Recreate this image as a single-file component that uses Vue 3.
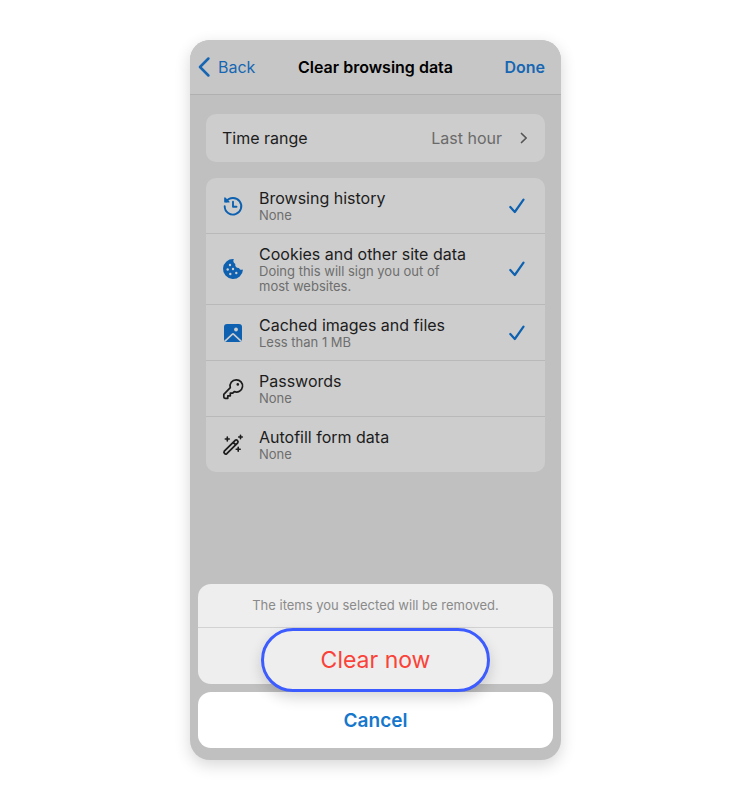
<script setup>
import { ref } from 'vue'

const timeRange = ref('Last hour')

const items = ref([
  { id: 'history', title: 'Browsing history', detail: 'None', checked: true },
  { id: 'cookies', title: 'Cookies and other site data', detail: 'Doing this will sign you out of most websites.', checked: true },
  { id: 'cache', title: 'Cached images and files', detail: 'Less than 1 MB', checked: true },
  { id: 'passwords', title: 'Passwords', detail: 'None', checked: false },
  { id: 'autofill', title: 'Autofill form data', detail: 'None', checked: false },
])

const clearNow = () => {
  items.value.forEach((item) => {
    if (item.checked) item.detail = 'None'
  })
}
</script>

<template>
  <main class="page">
    <div class="phone">
      <header class="nav">
        <button type="button" class="nav-back">
          <svg width="12" height="20" viewBox="0 0 12 20" fill="none" aria-hidden="true">
            <path d="M10.4 1.5 2 10l8.400 8.500" stroke="currentColor" stroke-width="2.500" stroke-linecap="round" stroke-linejoin="round" />
          </svg>
          Back
        </button>
        <h1 class="nav-title">Clear browsing data</h1>
        <button type="button" class="nav-done">Done</button>
      </header>

      <div class="content">
        <button type="button" class="card range">
          <span>Time range</span>
          <span class="range-value">{{ timeRange }}</span>
          <svg width="8" height="12" viewBox="0 0 8 12" fill="none" aria-hidden="true">
            <path d="M1.500 1.500 6.200 6l-4.700 4.500" stroke="currentColor" stroke-width="1.700" stroke-linecap="round" stroke-linejoin="round" />
          </svg>
        </button>

        <div class="card">
          <label v-for="item in items" :key="item.id" class="row" :for="item.id">
            <svg class="icon" :class="{ active: item.checked }" width="22" height="22" viewBox="0 0 22 22" fill="none" aria-hidden="true">
              <g v-if="item.id === 'history'" stroke="currentColor" stroke-width="1.900" stroke-linecap="round" stroke-linejoin="round">
                <path d="M4.200 6.500A8.300 8.300 0 1 1 2.700 11.200" />
                <path d="M2.900 3v3.900h4z" fill="currentColor" stroke-width="1.400" />
                <path d="M11 6.700v5.100h3.500" />
              </g>
              <g v-else-if="item.id === 'cookies'">
                <path fill="currentColor" d="M11.800 1A10 10 0 1 0 21 11.400c-1.600.9-3.400.2-4-1.500-2.500.3-4.300-1.700-3.700-4C11.500 5.200 10.800 3 11.800 1Z" />
                <g class="crumbs">
                  <circle cx="8" cy="7" r="1.200" />
                  <circle cx="5.700" cy="11.500" r="1.200" />
                  <circle cx="11" cy="11" r="1.200" />
                  <circle cx="8.300" cy="16" r="1.200" />
                  <circle cx="14.300" cy="15" r="1.200" />
                </g>
              </g>
              <g v-else-if="item.id === 'cache'">
                <rect x="2" y="2" width="18" height="18" rx="3" fill="currentColor" />
                <circle class="cutout-dot" cx="14" cy="7.500" r="1.900" />
                <path class="cutout-line" d="m3 19.200 7.200-6.900a1.200 1.200 0 0 1 1.600 0l7.200 6.900" />
              </g>
              <g v-else-if="item.id === 'passwords'" stroke="currentColor" stroke-width="1.700" stroke-linejoin="round">
                <path d="M14.200 1.800a6.100 6.100 0 0 0-5.900 7.900L1.800 16.300V19c0 .8.500 1.300 1.300 1.300h2.700v-2.500h2.500v-2.600h2.400l1.600-1.600a6.100 6.100 0 1 0 1.900-11.800Z" />
                <circle cx="15.800" cy="6.400" r="1.300" fill="currentColor" stroke="none" />
              </g>
              <g v-else stroke="currentColor" stroke-linecap="round" stroke-linejoin="round">
                <path stroke-width="1.800" d="M2.300 17.200 13.200 6.300a1.800 1.800 0 0 1 2.500 2.500L4.800 19.700a1.800 1.800 0 0 1-2.500-2.500Zm8.900-8.900 2.500 2.500" />
                <path stroke-width="1.600" d="M5.300 3v4M3.300 5h4M18.500 1.200v3.600M16.700 3h3.600M16.200 13.200v4M14.200 15.200h4" />
              </g>
            </svg>
            <span class="row-text">
              <span class="row-title">{{ item.title }}</span>
              <span class="row-detail">{{ item.detail }}</span>
            </span>
            <span class="check">
              <input :id="item.id" v-model="item.checked" type="checkbox" />
              <svg v-if="item.checked" width="16" height="16" viewBox="0 0 16 16" fill="none" aria-hidden="true">
                <path d="m1.300 9 4.500 5L14.500 1.700" stroke="currentColor" stroke-width="2.200" stroke-linecap="round" stroke-linejoin="round" />
              </svg>
            </span>
          </label>
        </div>
      </div>

      <section class="sheet">
        <div class="sheet-group">
          <p class="sheet-message">The items you selected will be removed.</p>
          <button type="button" class="sheet-clear" @click="clearNow">Clear now</button>
        </div>
        <button type="button" class="sheet-cancel">Cancel</button>
      </section>
    </div>
  </main>
</template>

<style>
body {
  margin: 0;
  background: #fff;
}
</style>

<style scoped>
.page {
  display: flex;
  justify-content: center;
  min-height: 100vh;
  padding: 40px 16px;
  box-sizing: border-box;
  font-family: Inter, "Liberation Sans", sans-serif;
}
button {
  margin: 0;
  padding: 0;
  border: 0;
  background: none;
  font: inherit;
  color: inherit;
  cursor: pointer;
}
.phone {
  display: flex;
  flex-direction: column;
  width: 100%;
  max-width: 371px;
  border-radius: 20px;
  background: #c0c0c0;
  box-shadow: 0 5px 16px rgba(0, 0, 0, 0.16);
  overflow: hidden;
}

.nav {
  display: grid;
  grid-template-columns: 1fr auto 1fr;
  align-items: center;
  height: 54px;
  padding: 0 8px;
  border-bottom: 1px solid #b0b0b0;
  background: #c6c6c6;
  font-size: 16px;
  color: #1766b3;
}
.nav-back {
  display: flex;
  align-items: center;
  gap: 8px;
  justify-self: start;
}
.nav-title {
  margin: 0;
  font-size: 16px;
  font-weight: 600;
  color: #000;
}
.nav-done {
  justify-self: end;
  padding-right: 8px;
  font-weight: 600;
}

.content {
  display: flex;
  flex-direction: column;
  gap: 16px;
  padding: 19px 16px;
}
.card {
  border-radius: 10px;
  background: #cdcdcd;
  color: #1c1c1c;
}
.range {
  display: flex;
  align-items: center;
  height: 48px;
  padding: 0 17px 0 16px;
  font-size: 16px;
  text-align: left;
}
.range-value {
  margin-left: auto;
  margin-right: 18px;
  color: #6a6a6a;
}
.range svg {
  color: #555;
}
.row {
  display: flex;
  align-items: center;
  padding: 10px 20px 10px 16px;
  cursor: pointer;
}
.row + .row {
  border-top: 1px solid #b9b9b9;
}
.icon {
  flex: none;
  margin-right: 15px;
  color: #1c1c1c;
}
.icon.active {
  color: #0d61b0;
}
.crumbs,
.cutout-dot {
  fill: #cdcdcd;
}
.cutout-line {
  stroke: #cdcdcd;
  stroke-width: 1.6;
}
.row-text {
  display: flex;
  flex: 1;
  flex-direction: column;
}
.row-title {
  font-size: 16px;
  line-height: 20px;
}
.row-detail {
  max-width: 200px;
  font-size: 13px;
  line-height: 15px;
  color: #6e6e6e;
}
.check {
  display: grid;
  place-items: center;
  width: 16px;
  height: 16px;
  color: #0d61b0;
}
.check input,
.check svg {
  grid-area: 1 / 1;
}
.check input {
  width: 16px;
  height: 16px;
  margin: 0;
  appearance: none;
}

.sheet {
  display: flex;
  flex-direction: column;
  gap: 8px;
  margin-top: auto;
  padding: 0 8px 12px;
}
.sheet-group {
  display: flex;
  flex-direction: column;
  align-items: center;
  border-radius: 13px;
  background: #eee;
}
.sheet-message {
  align-self: stretch;
  margin: 0;
  border-bottom: 1px solid #d2d2d2;
  font-size: 13px;
  line-height: 43px;
  text-align: center;
  color: #8a8a8a;
}
/* the highlighted pill hangs over the gap below its group */
.sheet-clear {
  position: relative;
  width: 229px;
  height: 64px;
  margin-bottom: -8px;
  border: 3px solid #3d5cff;
  border-radius: 32px;
  background: #eee;
  box-shadow: 0 6px 14px rgba(0, 0, 0, 0.16);
  font-size: 23px;
  color: #fa4238;
}
.sheet-cancel {
  height: 56px;
  border-radius: 13px;
  background: #fff;
  font-size: 19px;
  font-weight: 600;
  color: #1677cc;
}
</style>
